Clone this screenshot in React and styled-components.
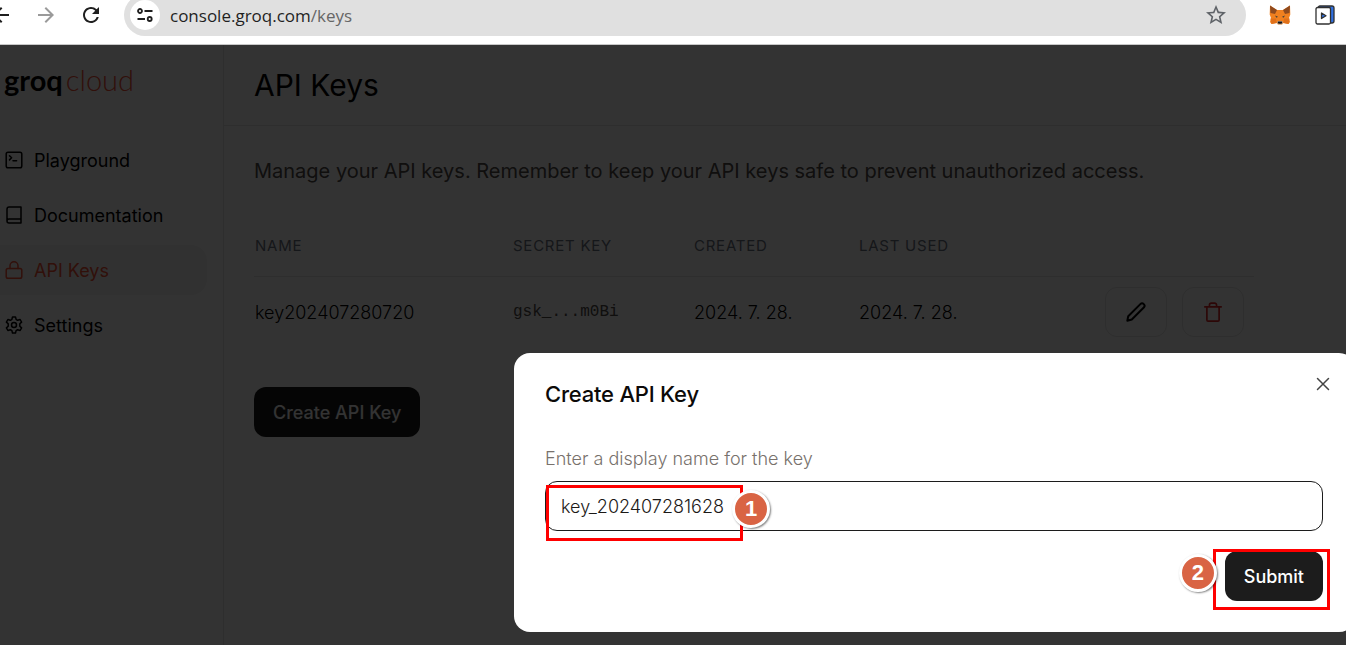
import React, { useState } from 'react';
import styled, { createGlobalStyle, css } from 'styled-components';
import { MdArrowBack, MdArrowForward, MdRefresh, MdStarBorder } from 'react-icons/md';

const color = {
  black: '#000000',
  ink: '#1c1c1c',
  text: '#4f4a48',
  muted: '#78716c',
  slate: '#6b7280',
  border: '#e4e4e4',
  hover: '#f3f3f3',
  brand: '#f55036',
  danger: '#dc2626',
  marker: '#ff0000',
  badge: '#d96444',
};

const GlobalStyle = createGlobalStyle`
  * {
    box-sizing: border-box;
  }

  body {
    margin: 0;
    overflow: hidden;
    font-family: Inter, sans-serif;
    font-size: 18px;
    color: ${color.black};
  }

  button, input {
    font: inherit;
  }
`;

const Window = styled.div`
  display: flex;
  flex-direction: column;
  height: 100vh;
`;

/* Browser toolbar */

const Toolbar = styled.header`
  display: flex;
  align-items: flex-end;
  gap: 11px;
  height: 45px;
  padding-bottom: 8px;
  overflow: hidden;
  background: #ffffff;
  border-bottom: 1px solid #c8c8c8;
`;

const NavButtons = styled.nav`
  display: flex;
  margin-left: -22px;
`;

const ToolButton = styled.button`
  display: flex;
  align-items: center;
  justify-content: center;
  flex: none;
  width: 45px;
  height: 42px;
  padding: 0;
  border: 0;
  background: none;
  color: ${props => (props.$dim ? '#9a9a9a' : '#1f1f1f')};
`;

const AddressBar = styled.div`
  display: flex;
  align-items: center;
  flex: 1;
  height: 42px;
  padding-left: 6px;
  border-radius: 21px;
  background: #e0e0e0;
`;

const SiteInfo = styled.button`
  display: flex;
  align-items: center;
  justify-content: center;
  width: 30px;
  height: 30px;
  padding: 0;
  border: 0;
  border-radius: 50%;
  background: #ffffff;
`;

const Url = styled.span`
  flex: 1;
  padding-left: 10px;
  font-family: 'Open Sans', sans-serif;
  font-size: 17px;
  color: #1f1f1f;

  span {
    color: #666666;
  }
`;

const StarButton = styled(ToolButton)`
  width: 60px;
  color: #5f6368;
`;

const Extensions = styled.div`
  display: flex;
  margin-right: -1px;
`;

/* Page */

const Page = styled.div`
  position: relative;
  display: flex;
  flex: 1;
  overflow: hidden;
  background: #ffffff;
`;

const Sidebar = styled.aside`
  flex: none;
  width: 224px;
  padding-right: 16px;
  border-right: 1px solid ${color.border};
`;

const Logo = styled.div`
  padding: 15px 0 0 4px;
  font-family: Lato, sans-serif;
  font-size: 29px;
  line-height: 40px;
  font-weight: 700;

  span {
    margin-left: 3px;
    font-weight: 300;
    color: ${color.brand};
  }
`;

const Menu = styled.nav`
  display: flex;
  flex-direction: column;
  gap: 5px;
  padding-top: 35px;
`;

const MenuLink = styled.a`
  display: flex;
  align-items: center;
  gap: 11px;
  height: 50px;
  padding-left: 5px;
  border-radius: 0 16px 16px 0;
  color: inherit;
  text-decoration: none;

  ${props => props.$active && css`
    background: ${color.hover};
    color: ${color.brand};
  `}
`;

const Main = styled.main`
  flex: 1;
  min-width: 0;
`;

const PageHeader = styled.div`
  padding: 20px 30px;
  border-bottom: 1px solid ${color.border};
`;

const PageTitle = styled.h1`
  margin: 0;
  font-size: 30px;
  line-height: 40px;
  font-weight: 400;
`;

const Content = styled.div`
  max-width: 1060px;
  padding: 30px;
`;

const Description = styled.p`
  margin: 0 0 30px;
  font-size: 20px;
  line-height: 30px;
  font-weight: 400;
  color: ${color.text};
`;

const Table = styled.table`
  width: 100%;
  margin-bottom: 39px;
  border-collapse: collapse;
  table-layout: fixed;
`;

const HeadCell = styled.th`
  width: ${props => props.$width || 'auto'};
  height: 60px;
  padding: 0 1px;
  border-bottom: 1px solid ${color.border};
  font-size: 15px;
  font-weight: 400;
  letter-spacing: 0.05em;
  text-align: left;
  text-transform: uppercase;
  color: ${color.slate};
`;

const Cell = styled.td`
  height: 72px;
  padding: 0 1px;
  font-weight: 300;
`;

const SecretCell = styled(Cell)`
  font-family: 'Liberation Mono', monospace;
  font-size: 16px;
  color: ${color.text};
`;

const Actions = styled.div`
  display: flex;
  justify-content: flex-end;
  gap: 15px;
  padding-right: 9px;
`;

const IconButton = styled.button`
  display: flex;
  align-items: center;
  justify-content: center;
  width: 62px;
  height: 50px;
  padding: 0;
  border: 1px solid ${color.border};
  border-radius: 12px;
  background: none;
  color: ${props => (props.$danger ? color.danger : color.black)};
`;

const Button = styled.button`
  height: 50px;
  padding: 0 19px;
  border: 0;
  border-radius: 12px;
  background: ${color.ink};
  color: #ffffff;
  font-weight: 500;
`;

/* Dialog */

const Overlay = styled.div`
  position: absolute;
  inset: 0;
  background: rgba(0, 0, 0, 0.8);
`;

const Dialog = styled.section`
  position: absolute;
  top: 308px;
  right: -9px;
  width: 841px;
  padding: 24px 32px 31px 31px;
  border-radius: 16px;
  background: #ffffff;
`;

const DialogTitle = styled.h2`
  margin: 0 0 36px;
  font-size: 22px;
  line-height: 34px;
  font-weight: 500;
  letter-spacing: -0.01em;
  color: #0c0a09;
`;

const CloseButton = styled.button`
  position: absolute;
  top: 20px;
  right: 21px;
  display: flex;
  padding: 2px;
  border: 0;
  background: none;
  color: #444444;
`;

const Label = styled.label`
  display: block;
  margin-bottom: 10px;
  line-height: 24px;
  font-weight: 300;
  color: ${color.muted};
`;

const Field = styled.div`
  position: relative;
  margin-bottom: 20px;
`;

const TextInput = styled.input`
  display: block;
  width: 100%;
  height: 50px;
  padding: 0 15px;
  border: 1px solid ${color.ink};
  border-radius: 12px;
  outline: none;
  background: #ffffff;
  color: #1c1917;
  font-weight: 300;
`;

const DialogFooter = styled.div`
  display: flex;
  justify-content: flex-end;
`;

const SubmitWrap = styled.div`
  position: relative;
`;

/* Tutorial markers drawn over the controls */

const Marker = styled.div`
  position: absolute;
  inset: ${props => props.$inset};
  width: ${props => props.$width || 'auto'};
  border: 3px solid ${color.marker};
  pointer-events: none;
`;

const Badge = styled.span`
  position: absolute;
  top: ${props => props.$top};
  left: ${props => props.$left};
  display: flex;
  align-items: center;
  justify-content: center;
  width: 38px;
  height: 38px;
  border: 3px solid #ffffff;
  border-radius: 50%;
  background: ${color.badge};
  box-shadow: 1px 1px 2px rgba(0, 0, 0, 0.5);
  color: #ffffff;
  font-family: 'Liberation Sans', sans-serif;
  font-size: 22px;
  font-weight: 700;
`;

const Icon = ({ size = 18, stroke = 1.5, children }) => (
  <svg
    width={size}
    height={size}
    viewBox="0 0 18 18"
    fill="none"
    stroke="currentColor"
    strokeWidth={stroke}
    strokeLinecap="round"
    strokeLinejoin="round"
    aria-hidden="true"
  >
    {children}
  </svg>
);

const TerminalIcon = () => (
  <Icon>
    <rect x="1.2" y="1.2" width="15.6" height="15.6" rx="1.8" />
    <path d="M4.5 4.7 6.6 6.8 4.5 8.9M8 9.8h3.6" />
  </Icon>
);

const BookIcon = () => (
  <Icon>
    <path d="M16 13V1H4.2A2.2 2.2 0 0 0 2 3.2V15a2 2 0 0 0 2 2h12v-4H4a2 2 0 0 0-2 2" />
  </Icon>
);

const LockIcon = () => (
  <Icon>
    <rect x="1.2" y="7.6" width="15.6" height="9.6" rx="1.8" />
    <path d="M5 7.5V4.8a4 4 0 0 1 8 0v2.7" />
  </Icon>
);

const GearIcon = () => (
  <Icon>
    <circle cx="9" cy="9" r="2.5" />
    <path d="M7.5 0.9h3l.6 2.500 1.500.9 2.500-.8 1.500 2.600-1.800 1.700v2.400l1.800 1.700-1.500 2.600-2.500-.8-1.500.9-.6 2.500h-3l-.6-2.500-1.500-.9-2.500.8-1.500-2.600 1.800-1.700V7.800L1.400 6.100l1.500-2.600 2.500.8 1.500-.9z" />
  </Icon>
);

const PencilIcon = () => (
  <Icon size={20} stroke={1.8}>
    <path d="M1.2 16.8 2 12.8 12.9 1.9a2.2 2.2 0 0 1 3.1 0 2.2 2.2 0 0 1 0 3.1L5.2 15.8z" />
  </Icon>
);

const TrashIcon = () => (
  <Icon size={20}>
    <path d="M1.6 4.4h14.8M3.5 4.4v11.8a1 1 0 0 0 1 1h9a1 1 0 0 0 1-1V4.4M5.8 4.4V2.7A1.7 1.7 0 0 1 7.5 1h3a1.700 1.700 0 0 1 1.700 1.700v1.700" />
  </Icon>
);

const CloseIcon = () => (
  <Icon>
    <path d="M3.5 3.5l11 11M14.5 3.5l-11 11" />
  </Icon>
);

const TuneIcon = () => (
  <svg width="16" height="14" viewBox="0 0 16 14" fill="none" stroke="#1f1f1f" strokeWidth="1.8" aria-hidden="true">
    <circle cx="3" cy="3" r="2" />
    <path d="M7.5 3h8M0.5 11H8" />
    <circle cx="12.7" cy="11" r="2" />
  </svg>
);

const FoxIcon = () => (
  <svg width="22" height="20" viewBox="0 0 22 20" aria-hidden="true">
    <path d="M1 0.5 8 5h6l7-4.5 .3 9L20 13l1 4-1.5 2-5-1-1.5 1.5H9L7.5 18l-5 1L1 17l1-4-1.300-3.500z" fill="#f0801f" />
    <path d="M1 0.5 8 5 6 9 1.5 8zM21 0.5 14 5l2 4 4.5-1z" fill="#8f4a1e" />
    <path d="M1.5 13.5H7l.5 4.5-5 1zM20.5 13.500H15l-.5 4.500 5 1z" fill="#e0701a" />
    <path d="M6 10.5l3 1.2-1.5 1zM16 10.5l-3 1.2 1.5 1z" fill="#3c3c3c" />
    <path d="M8 17.5l1-1.5h4l1 1.5-1 2H9z" fill="#c9b5a4" />
    <path d="M9 16.5h4l.3 1.2-.8 1h-3l-.8-1z" fill="#161616" />
  </svg>
);

const PlayerIcon = () => (
  <svg width="20" height="20" viewBox="0 0 20 20" stroke="#303030" strokeWidth="1.3" strokeLinejoin="round" aria-hidden="true">
    <rect x="3" y="1" width="16" height="17" rx="2" fill="#2f6fe0" />
    <rect x="1" y="2.5" width="14.5" height="16.5" rx="1.5" fill="#ffffff" />
    <path d="M6.500 8v5.500l4.500-2.700z" fill="#2f6fe0" />
  </svg>
);

const menu = [
  { label: 'Playground', icon: TerminalIcon },
  { label: 'Documentation', icon: BookIcon },
  { label: 'API Keys', icon: LockIcon, active: true },
  { label: 'Settings', icon: GearIcon },
];

const keys = [
  { name: 'key202407280720', secret: 'gsk_...m0Bi', created: '2024. 7. 28.', lastUsed: '2024. 7. 28.' },
];

const BrowserToolbar = () => (
  <Toolbar>
    <NavButtons aria-label="Browser">
      <ToolButton aria-label="Back"><MdArrowBack size={24} /></ToolButton>
      <ToolButton $dim aria-label="Forward"><MdArrowForward size={24} /></ToolButton>
      <ToolButton aria-label="Reload"><MdRefresh size={24} /></ToolButton>
    </NavButtons>
    <AddressBar>
      <SiteInfo aria-label="Site information"><TuneIcon /></SiteInfo>
      <Url>console.groq.com<span>/keys</span></Url>
      <StarButton aria-label="Bookmark"><MdStarBorder size={24} /></StarButton>
    </AddressBar>
    <Extensions>
      <ToolButton aria-label="Wallet"><FoxIcon /></ToolButton>
      <ToolButton aria-label="Player"><PlayerIcon /></ToolButton>
    </Extensions>
  </Toolbar>
);

const KeysTable = () => (
  <Table>
    <thead>
      <tr>
        <HeadCell $width="258px">Name</HeadCell>
        <HeadCell $width="181px">Secret Key</HeadCell>
        <HeadCell $width="165px">Created</HeadCell>
        <HeadCell $width="165px">Last Used</HeadCell>
        <HeadCell aria-label="Actions" />
      </tr>
    </thead>
    <tbody>
      {keys.map(key => (
        <tr key={key.name}>
          <Cell>{key.name}</Cell>
          <SecretCell>{key.secret}</SecretCell>
          <Cell>{key.created}</Cell>
          <Cell>{key.lastUsed}</Cell>
          <Cell>
            <Actions>
              <IconButton aria-label="Edit"><PencilIcon /></IconButton>
              <IconButton $danger aria-label="Delete"><TrashIcon /></IconButton>
            </Actions>
          </Cell>
        </tr>
      ))}
    </tbody>
  </Table>
);

const CreateKeyDialog = () => {
  const [name, setName] = useState('key_202407281628');

  return (
    <Overlay>
      <Dialog role="dialog" aria-labelledby="dialog-title">
        <DialogTitle id="dialog-title">Create API Key</DialogTitle>
        <CloseButton aria-label="Close"><CloseIcon /></CloseButton>
        <Label htmlFor="key-name">Enter a display name for the key</Label>
        <Field>
          <TextInput id="key-name" value={name} onChange={e => setName(e.target.value)} />
          <Marker $inset="4px auto -10px 1px" $width="197px" />
          <Badge $top="9px" $left="187px">1</Badge>
        </Field>
        <DialogFooter>
          <SubmitWrap>
            <Button type="submit">Submit</Button>
            <Marker $inset="-2px -7px -9px -12px" />
            <Badge $top="3px" $left="-46px">2</Badge>
          </SubmitWrap>
        </DialogFooter>
      </Dialog>
    </Overlay>
  );
};

const App = () => (
  <Window>
    <GlobalStyle />
    <BrowserToolbar />
    <Page>
      <Sidebar>
        <Logo>groq<span>cloud</span></Logo>
        <Menu aria-label="Console">
          {menu.map(({ label, icon: ItemIcon, active }) => (
            <MenuLink key={label} href="#" $active={active}>
              <ItemIcon />
              {label}
            </MenuLink>
          ))}
        </Menu>
      </Sidebar>
      <Main>
        <PageHeader>
          <PageTitle>API Keys</PageTitle>
        </PageHeader>
        <Content>
          <Description>
            Manage your API keys. Remember to keep your API keys safe to prevent unauthorized access.
          </Description>
          <KeysTable />
          <Button type="button">Create API Key</Button>
        </Content>
      </Main>
      <CreateKeyDialog />
    </Page>
  </Window>
);

export default App;
